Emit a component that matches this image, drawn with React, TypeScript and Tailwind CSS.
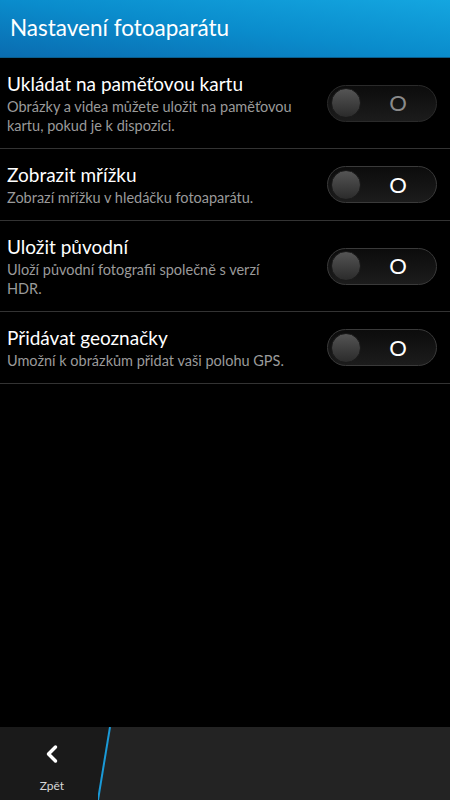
import { ChevronLeft } from 'lucide-react';

const settings = [
  {
    title: 'Ukládat na paměťovou kartu',
    desc: 'Obrázky a videa můžete uložit na paměťovou kartu, pokud je k dispozici.',
    disabled: true,
  },
  { title: 'Zobrazit mřížku', desc: 'Zobrazí mřížku v hledáčku fotoaparátu.' },
  { title: 'Uložit původní', desc: 'Uloží původní fotografii společně s verzí HDR.' },
  { title: 'Přidávat geoznačky', desc: 'Umožní k obrázkům přidat vaši polohu GPS.' },
];

function Toggle({ disabled }: { disabled?: boolean }) {
  return (
    <div
      className={`w-[110px] h-[37px] rounded-full border flex items-center px-[3px] bg-gradient-to-b from-[#0c0c0c] to-[#1c1c1c] ${
        disabled ? 'border-[#2a2a2a]' : 'border-[#3a3a3a]'
      }`}
    >
      <div className="w-[30px] h-[30px] rounded-full border border-[#1a1a1a] bg-gradient-to-b from-[#555] to-[#2b2b2b]" />
      <div
        className={`flex-1 text-center text-[22px] leading-none pl-[2px] ${disabled ? 'text-[#8a8a8a]' : 'text-white'}`}
      >
        O
      </div>
    </div>
  );
}

export default function App() {
  return (
    <div
      className="w-[450px] h-[800px] bg-black flex flex-col overflow-hidden"
      style={{ fontFamily: 'Lato, "Open Sans", sans-serif' }}
    >
      <div className="h-[58px] shrink-0 bg-gradient-to-tr from-[#0a6cb0] via-[#0a8ccc] to-[#14a6e0] border-b border-[#0a5d8c] flex items-center px-[10px]">
        <h1 className="text-white text-[22.5px] leading-none">Nastavení fotoaparátu</h1>
      </div>

      <div className="flex-1">
        {settings.map((s) => (
          <div
            key={s.title}
            className="flex items-center border-b border-[#333] pl-[7px] pr-[13px] pt-[13px] pb-[13px]"
          >
            <div className="flex-1 pr-[20px]">
              <div className="text-white text-[19px] leading-[26px]">{s.title}</div>
              <div className="text-[#9a9a9a] text-[14.5px] leading-[19px] max-w-[287px]">{s.desc}</div>
            </div>
            <Toggle disabled={s.disabled} />
          </div>
        ))}
      </div>

      <div className="h-[73px] shrink-0 flex bg-[#232323]">
        <div className="w-[104px] bg-[#1a1a1a] flex flex-col items-center justify-center pt-[8px]">
          <ChevronLeft className="w-[28px] h-[28px] text-white" strokeWidth={3} />
          <div className="text-[#d8d8d8] text-[12px] mt-[9px]">Zpět</div>
        </div>
        <svg width="14" height="73" viewBox="0 0 14 73" className="-ml-[6px]">
          <polygon points="0,0 14,0 14,73 0,73" fill="#232323" />
          <polygon points="0,0 12,0 0,73" fill="#1a1a1a" />
          <line x1="12" y1="0" x2="0" y2="73" stroke="#1a9ad8" strokeWidth="2" />
        </svg>
        <div className="flex-1" />
      </div>
    </div>
  );
}
